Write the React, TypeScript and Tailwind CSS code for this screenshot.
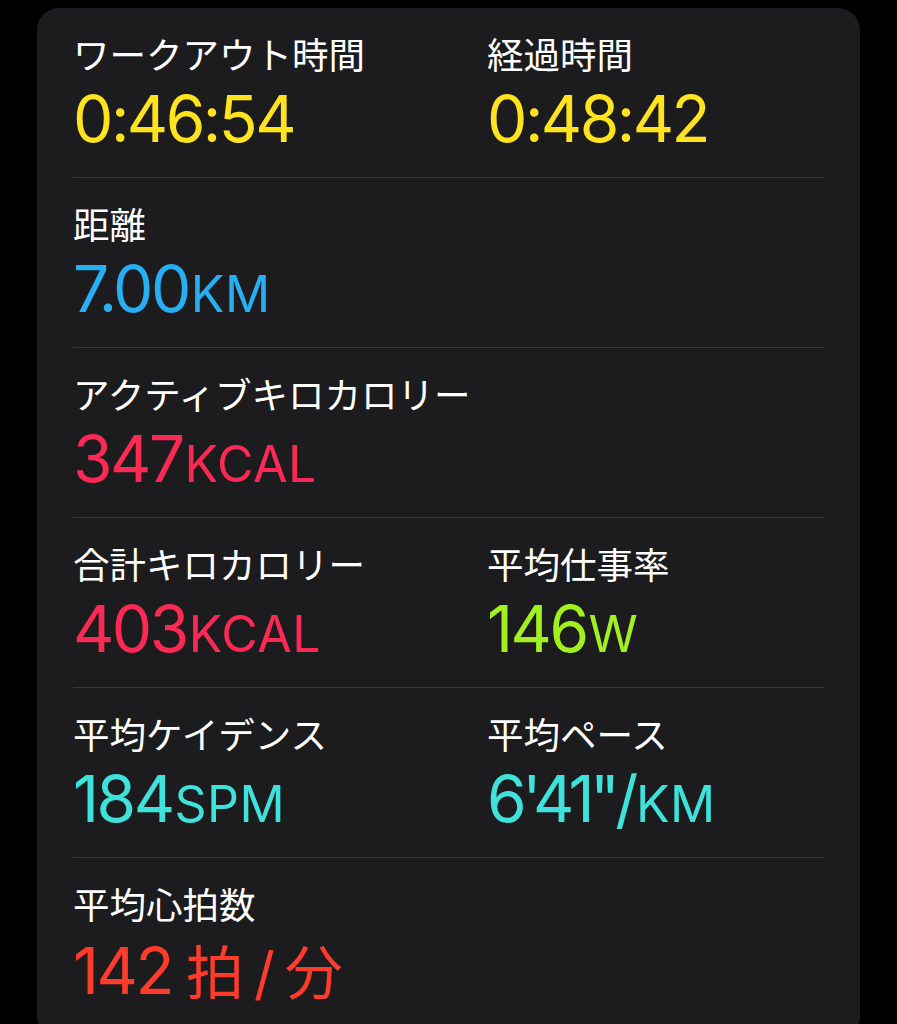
import React from "react";

const LABEL_FONT = { fontFamily: '"Noto Sans CJK JP", "Noto Sans", sans-serif' };
const VALUE_FONT = { fontFamily: 'Inter, "Noto Sans CJK JP", sans-serif' };

function Label({ children }: { children: React.ReactNode }) {
  return (
    <div className="text-[36.5px] leading-[52px] text-white" style={LABEL_FONT}>
      {children}
    </div>
  );
}

function Value({ num, unit, color, tight }: { num: string; unit?: string; color: string; tight?: boolean }) {
  return (
    <div className={`flex items-baseline leading-[78px] ${color}`} style={VALUE_FONT}>
      <span className={`text-[64px] ${tight ? "tracking-[-4.5px]" : "tracking-[-2.5px]"}`}>{num}</span>
      {unit && <span className="text-[50px] tracking-[0.5px] ml-[2px]">{unit}</span>}
    </div>
  );
}

function Cell({ label, children }: { label: string; children: React.ReactNode }) {
  return (
    <div className="flex flex-col">
      <Label>{label}</Label>
      {children}
    </div>
  );
}

function Row({ children, last }: { children: React.ReactNode; last?: boolean }) {
  return (
    <div className={`grid grid-cols-[414px_1fr] pt-[20px] ${last ? "" : "h-[170px] border-b border-[#38383a]"}`}>
      {children}
    </div>
  );
}

export default function App() {
  return (
    <div className="min-h-[1024px] w-[897px] bg-black pt-[8px] pl-[37px] overflow-hidden">
      <div className="w-[823px] h-[1030px] rounded-[22px] bg-[#1c1c1e] px-[36px]">
        <Row>
          <Cell label="ワークアウト時間">
            <Value num="0:46:54" color="text-[#ffe31f]" />
          </Cell>
          <Cell label="経過時間">
            <Value num="0:48:42" color="text-[#ffe31f]" />
          </Cell>
        </Row>
        <Row>
          <Cell label="距離">
            <Value num="7.00" unit="KM" color="text-[#27aef3]" />
          </Cell>
        </Row>
        <Row>
          <Cell label="アクティブキロカロリー">
            <Value num="347" unit="KCAL" color="text-[#fa2a55]" />
          </Cell>
        </Row>
        <Row>
          <Cell label="合計キロカロリー">
            <Value num="403" unit="KCAL" color="text-[#fa2a55]" />
          </Cell>
          <Cell label="平均仕事率">
            <Value num="146" unit="W" color="text-[#a2f01f]" />
          </Cell>
        </Row>
        <Row>
          <Cell label="平均ケイデンス">
            <Value num="184" unit="SPM" color="text-[#3ee2da]" />
          </Cell>
          <Cell label="平均ペース">
            <Value num={"6'41\"/"} unit="KM" color="text-[#3ee2da]" tight />
          </Cell>
        </Row>
        <Row last>
          <Cell label="平均心拍数">
            <div className="flex items-baseline leading-[78px] text-[#ff3b2b]" style={VALUE_FONT}>
              <span className="text-[64px] tracking-[-2.5px]">142</span>
              <span className="text-[58px] ml-[14px]" style={LABEL_FONT}>拍</span>
              <span className="text-[58px] mx-[10px]">/</span>
              <span className="text-[58px]" style={LABEL_FONT}>分</span>
            </div>
          </Cell>
        </Row>
      </div>
    </div>
  );
}
